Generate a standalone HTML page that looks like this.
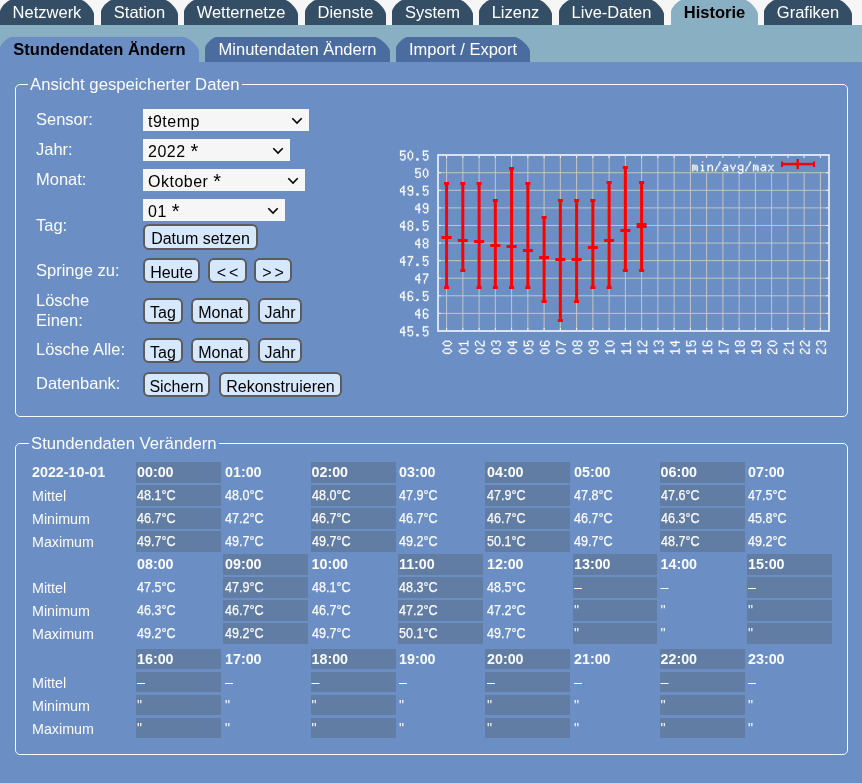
<!DOCTYPE html>
<html><head><meta charset="utf-8"><style>
*{box-sizing:border-box}
html,body{margin:0;padding:0}
body{will-change:transform;width:862px;height:783px;overflow:hidden;position:relative;background:#6b8fc4;font-family:"Liberation Sans",sans-serif;}
.abs{position:absolute}
#top{position:absolute;left:0;top:0;width:862px;height:25px;background:#f6f6f6}
#band{position:absolute;left:0;top:25px;width:862px;height:37px;background:#88b0c2}
.tab{position:absolute;top:0;height:25px;background:#344e66;color:#fff;font-size:16.5px;line-height:25px;text-align:center;
 white-space:nowrap}
.tab.act{background:#88b0c2;color:#000;font-weight:bold}
.sub{position:absolute;top:37px;height:25px;background:#4b6c9f;color:#fff;font-size:16.5px;line-height:25px;text-align:center;
 white-space:nowrap}
.sub.act{background:#6b8fc4;color:#000;font-weight:bold}
.fs{position:absolute;border:1px solid #fafafa;border-radius:5px}
.leg{position:absolute;background:#6b8fc4;color:#fbfbfb;font-size:16.7px;line-height:19px;padding:0 2px;white-space:nowrap}
.lbl{position:absolute;color:#fbfbfb;font-size:16.5px;line-height:20px;white-space:nowrap}
.sel{position:absolute;background:#f6f6f6;height:22px;color:#000;font-size:16px;line-height:22px;padding-top:1.5px;padding-left:5px;letter-spacing:0.5px;white-space:nowrap}
.ast{font-size:20px;position:relative;top:1px;line-height:0}
.sel svg{position:absolute;right:6px;top:7.5px}
.btn{position:absolute;background:#d6e8fc;border:2px solid #5c5c5c;border-radius:6px;color:#000;font-size:16px;text-align:center;white-space:nowrap}
.cl{position:absolute;color:#fbfbfb;font-size:14.3px;line-height:21px;white-space:nowrap}
.c{position:absolute;width:85px;height:21px;color:#fbfbfb;font-size:14.3px;line-height:21px;padding-left:1px;white-space:nowrap}
.c.d{background:#617da3}
.v{display:inline-block;transform:scaleX(0.88);transform-origin:0 50%;-webkit-text-stroke:0.25px #fbfbfb}
.b{font-weight:bold;font-size:14.3px}
</style></head><body>
<div id="top"></div><div id="band"></div>

<div class="tab" style="left:0px;width:94px;clip-path:path('M0 25L0 11.5C0 7.82 7.48 0 11 0L81 0C85.16 0 94 9.86 94 14.5L94 25Z')">Netzwerk</div>
<div class="tab" style="left:101px;width:77px;clip-path:path('M0 25L0 11.5C0 7.82 7.48 0 11 0L64 0C68.16 0 77 9.86 77 14.5L77 25Z')">Station</div>
<div class="tab" style="left:184px;width:114px;clip-path:path('M0 25L0 11.5C0 7.82 7.48 0 11 0L101 0C105.16 0 114 9.86 114 14.5L114 25Z')">Wetternetze</div>
<div class="tab" style="left:305px;width:81px;clip-path:path('M0 25L0 11.5C0 7.82 7.48 0 11 0L68 0C72.16 0 81 9.86 81 14.5L81 25Z')">Dienste</div>
<div class="tab" style="left:392px;width:81px;clip-path:path('M0 25L0 11.5C0 7.82 7.48 0 11 0L68 0C72.16 0 81 9.86 81 14.5L81 25Z')">System</div>
<div class="tab" style="left:479px;width:73px;clip-path:path('M0 25L0 11.5C0 7.82 7.48 0 11 0L60 0C64.16 0 73 9.86 73 14.5L73 25Z')">Lizenz</div>
<div class="tab" style="left:559px;width:105px;clip-path:path('M0 25L0 11.5C0 7.82 7.48 0 11 0L92 0C96.16 0 105 9.86 105 14.5L105 25Z')">Live-Daten</div>
<div class="tab act" style="left:671px;width:87px;clip-path:path('M0 25L0 11.5C0 7.82 7.48 0 11 0L74 0C78.16 0 87 9.86 87 14.5L87 25Z')">Historie</div>
<div class="tab" style="left:764px;width:88px;clip-path:path('M0 25L0 11.5C0 7.82 7.48 0 11 0L75 0C79.16 0 88 9.86 88 14.5L88 25Z')">Grafiken</div>
<div class="sub act" style="left:0px;width:199px;clip-path:path('M0 25L0 11C0 7.48 7.82 0 11.5 0L183.5 0C188.46 0 199 9.86 199 14.5L199 25Z')">Stundendaten Ändern</div>
<div class="sub" style="left:205px;width:185px;clip-path:path('M0 25L0 11C0 7.48 7.82 0 11.5 0L169.5 0C174.46 0 185 9.86 185 14.5L185 25Z')">Minutendaten Ändern</div>
<div class="sub" style="left:396px;width:134px;clip-path:path('M0 25L0 11C0 7.48 7.82 0 11.5 0L118.5 0C123.46 0 134 9.86 134 14.5L134 25Z')">Import / Export</div>
<div class="fs" style="left:15px;top:84px;width:833px;height:333px"></div>
<div class="leg" style="left:28px;top:75px">Ansicht gespeicherter Daten</div>
<div class="fs" style="left:15px;top:443px;width:833px;height:312px"></div>
<div class="leg" style="left:29px;top:434px">Stundendaten Verändern</div>
<div class="sel" style="left:143px;top:109px;width:166px">t9temp<svg width="12" height="8" viewBox="0 0 12 8"><path d="M1.3 1.3 L6 6 L10.7 1.3" fill="none" stroke="#000" stroke-width="1.6"/></svg></div>
<div class="sel" style="left:143px;top:139px;width:147px">2022 <span class=ast>*</span><svg width="12" height="8" viewBox="0 0 12 8"><path d="M1.3 1.3 L6 6 L10.7 1.3" fill="none" stroke="#000" stroke-width="1.6"/></svg></div>
<div class="sel" style="left:143px;top:169px;width:162px">Oktober <span class=ast>*</span><svg width="12" height="8" viewBox="0 0 12 8"><path d="M1.3 1.3 L6 6 L10.7 1.3" fill="none" stroke="#000" stroke-width="1.6"/></svg></div>
<div class="sel" style="left:143px;top:199px;width:142px">01 <span class=ast>*</span><svg width="12" height="8" viewBox="0 0 12 8"><path d="M1.3 1.3 L6 6 L10.7 1.3" fill="none" stroke="#000" stroke-width="1.6"/></svg></div>
<div class="lbl" style="left:36px;top:109px">Sensor:</div>
<div class="lbl" style="left:36px;top:139px">Jahr:</div>
<div class="lbl" style="left:36px;top:169px">Monat:</div>
<div class="lbl" style="left:36px;top:215px">Tag:</div>
<div class="lbl" style="left:36px;top:260px">Springe zu:</div>
<div class="lbl" style="left:36px;top:290px">Lösche</div>
<div class="lbl" style="left:36px;top:310px">Einen:</div>
<div class="lbl" style="left:36px;top:339px">Lösche Alle:</div>
<div class="lbl" style="left:36px;top:373px">Datenbank:</div>
<div class="btn" style="left:143px;top:224px;width:115px;height:25.5px;line-height:21.5px;padding-top:2px">Datum setzen</div>
<div class="btn" style="left:143px;top:258px;width:57px;height:25px;line-height:21px;padding-top:2px">Heute</div>
<div class="btn" style="left:208px;top:258px;width:39px;height:25px;line-height:21px;padding-top:2px"><span style="letter-spacing:3px;padding-left:3px">&lt;&lt;</span></div>
<div class="btn" style="left:254px;top:258px;width:38px;height:25px;line-height:21px;padding-top:2px"><span style="letter-spacing:3px;padding-left:3px">&gt;&gt;</span></div>
<div class="btn" style="left:143px;top:297.5px;width:40px;height:26.0px;line-height:22.0px;padding-top:2px">Tag</div>
<div class="btn" style="left:191px;top:297.5px;width:59px;height:26.0px;line-height:22.0px;padding-top:2px">Monat</div>
<div class="btn" style="left:258px;top:297.5px;width:44px;height:26.0px;line-height:22.0px;padding-top:2px">Jahr</div>
<div class="btn" style="left:143px;top:337.5px;width:40px;height:25.0px;line-height:21.0px;padding-top:2px">Tag</div>
<div class="btn" style="left:191px;top:337.5px;width:59px;height:25.0px;line-height:21.0px;padding-top:2px">Monat</div>
<div class="btn" style="left:258px;top:337.5px;width:44px;height:25.0px;line-height:21.0px;padding-top:2px">Jahr</div>
<div class="btn" style="left:143px;top:372px;width:67px;height:25px;line-height:21px;padding-top:2px">Sichern</div>
<div class="btn" style="left:219px;top:372px;width:123px;height:25px;line-height:21px;padding-top:2px">Rekonstruieren</div>
<svg class="abs" style="left:0;top:0" width="862" height="783" viewBox="0 0 862 783"><path d="M446.58 156V330 M462.83 156V330 M479.09 156V330 M495.34 156V330 M511.59 156V330 M527.85 156V330 M544.1 156V330 M560.35 156V330 M576.6 156V330 M592.86 156V330 M609.11 156V330 M625.36 156V330 M641.62 156V330 M657.87 156V330 M674.12 156V330 M690.38 156V330 M706.63 156V330 M722.88 156V330 M739.13 156V330 M755.39 156V330 M771.64 156V330 M787.89 156V330 M804.15 156V330 M820.4 156V330 M439 172.73H829 M439 190.31H829 M439 207.89H829 M439 225.47H829 M439 243.05H829 M439 260.63H829 M439 278.21H829 M439 295.79H829 M439 313.37H829" stroke="#c4c4c4" stroke-width="1" fill="none"/><rect x="691" y="156" width="137" height="16" fill="#6b8fc4"/><g fill="#f2f2f2"><rect x="446.08" y="156" width="1" height="2"/><rect x="446.08" y="328" width="1" height="2"/><rect x="462.33" y="156" width="1" height="2"/><rect x="462.33" y="328" width="1" height="2"/><rect x="478.59" y="156" width="1" height="2"/><rect x="478.59" y="328" width="1" height="2"/><rect x="494.84" y="156" width="1" height="2"/><rect x="494.84" y="328" width="1" height="2"/><rect x="511.09" y="156" width="1" height="2"/><rect x="511.09" y="328" width="1" height="2"/><rect x="527.35" y="156" width="1" height="2"/><rect x="527.35" y="328" width="1" height="2"/><rect x="543.60" y="156" width="1" height="2"/><rect x="543.60" y="328" width="1" height="2"/><rect x="559.85" y="156" width="1" height="2"/><rect x="559.85" y="328" width="1" height="2"/><rect x="576.10" y="156" width="1" height="2"/><rect x="576.10" y="328" width="1" height="2"/><rect x="592.36" y="156" width="1" height="2"/><rect x="592.36" y="328" width="1" height="2"/><rect x="608.61" y="156" width="1" height="2"/><rect x="608.61" y="328" width="1" height="2"/><rect x="624.86" y="156" width="1" height="2"/><rect x="624.86" y="328" width="1" height="2"/><rect x="641.12" y="156" width="1" height="2"/><rect x="641.12" y="328" width="1" height="2"/><rect x="657.37" y="156" width="1" height="2"/><rect x="657.37" y="328" width="1" height="2"/><rect x="673.62" y="156" width="1" height="2"/><rect x="673.62" y="328" width="1" height="2"/><rect x="689.88" y="156" width="1" height="2"/><rect x="689.88" y="328" width="1" height="2"/><rect x="706.13" y="156" width="1" height="2"/><rect x="706.13" y="328" width="1" height="2"/><rect x="722.38" y="156" width="1" height="2"/><rect x="722.38" y="328" width="1" height="2"/><rect x="738.63" y="156" width="1" height="2"/><rect x="738.63" y="328" width="1" height="2"/><rect x="754.89" y="156" width="1" height="2"/><rect x="754.89" y="328" width="1" height="2"/><rect x="771.14" y="156" width="1" height="2"/><rect x="771.14" y="328" width="1" height="2"/><rect x="787.39" y="156" width="1" height="2"/><rect x="787.39" y="328" width="1" height="2"/><rect x="803.65" y="156" width="1" height="2"/><rect x="803.65" y="328" width="1" height="2"/><rect x="819.90" y="156" width="1" height="2"/><rect x="819.90" y="328" width="1" height="2"/><rect x="439" y="172.23" width="2" height="1"/><rect x="826" y="172.23" width="2" height="1"/><rect x="439" y="189.81" width="2" height="1"/><rect x="826" y="189.81" width="2" height="1"/><rect x="439" y="207.39" width="2" height="1"/><rect x="826" y="207.39" width="2" height="1"/><rect x="439" y="224.97" width="2" height="1"/><rect x="826" y="224.97" width="2" height="1"/><rect x="439" y="242.55" width="2" height="1"/><rect x="826" y="242.55" width="2" height="1"/><rect x="439" y="260.13" width="2" height="1"/><rect x="826" y="260.13" width="2" height="1"/><rect x="439" y="277.71" width="2" height="1"/><rect x="826" y="277.71" width="2" height="1"/><rect x="439" y="295.29" width="2" height="1"/><rect x="826" y="295.29" width="2" height="1"/><rect x="439" y="312.87" width="2" height="1"/><rect x="826" y="312.87" width="2" height="1"/></g><rect x="438" y="155" width="391" height="176" fill="none" stroke="#e6ecf5" stroke-width="1.8"/><g fill="#ff0000"><rect x="445.08" y="183.3" width="3" height="104.7"/><rect x="444.08" y="182" width="5" height="3"/><rect x="444.08" y="286" width="5" height="3"/><rect x="441.58" y="236" width="10" height="3"/><rect x="461.33" y="183.3" width="3" height="86.9"/><rect x="460.33" y="182" width="5" height="3"/><rect x="460.33" y="269" width="5" height="3"/><rect x="457.83" y="239" width="10" height="3"/><rect x="477.59" y="183.3" width="3" height="104.7"/><rect x="476.59" y="182" width="5" height="3"/><rect x="476.59" y="286" width="5" height="3"/><rect x="474.09" y="240" width="10" height="3"/><rect x="493.84" y="200.7" width="3" height="87.3"/><rect x="492.84" y="199" width="5" height="3"/><rect x="492.84" y="286" width="5" height="3"/><rect x="490.34" y="244" width="10" height="3"/><rect x="510.09" y="168.3" width="3" height="119.7"/><rect x="509.09" y="167" width="5" height="3"/><rect x="509.09" y="286" width="5" height="3"/><rect x="506.59" y="245" width="10" height="3"/><rect x="526.35" y="183.3" width="3" height="104.7"/><rect x="525.35" y="182" width="5" height="3"/><rect x="525.35" y="286" width="5" height="3"/><rect x="522.85" y="249" width="10" height="3"/><rect x="542.6" y="217.9" width="3" height="83.6"/><rect x="541.6" y="216" width="5" height="3"/><rect x="541.6" y="300" width="5" height="3"/><rect x="539.1" y="256" width="10" height="3"/><rect x="558.85" y="200.4" width="3" height="119.8"/><rect x="557.85" y="199" width="5" height="3"/><rect x="557.85" y="319" width="5" height="3"/><rect x="555.35" y="258" width="10" height="3"/><rect x="575.1" y="200.4" width="3" height="101.1"/><rect x="574.1" y="199" width="5" height="3"/><rect x="574.1" y="300" width="5" height="3"/><rect x="571.6" y="258" width="10" height="3"/><rect x="591.36" y="200.4" width="3" height="87.2"/><rect x="590.36" y="199" width="5" height="3"/><rect x="590.36" y="286" width="5" height="3"/><rect x="587.86" y="246" width="10" height="3"/><rect x="607.61" y="182.8" width="3" height="104.8"/><rect x="606.61" y="181" width="5" height="3"/><rect x="606.61" y="286" width="5" height="3"/><rect x="604.11" y="239" width="10" height="3"/><rect x="623.86" y="168.0" width="3" height="102.2"/><rect x="622.86" y="166" width="5" height="3"/><rect x="622.86" y="269" width="5" height="3"/><rect x="620.36" y="229" width="10" height="3"/><rect x="640.12" y="182.8" width="3" height="87.4"/><rect x="639.12" y="181" width="5" height="3"/><rect x="639.12" y="269" width="5" height="3"/><rect x="636.62" y="223" width="10" height="5"/><rect x="781" y="162.8" width="34" height="2.6"/><rect x="781" y="161.5" width="2" height="5.5"/><rect x="813" y="161.5" width="2" height="5.5"/><rect x="796.5" y="159" width="2.4" height="10.2"/></g><g fill="#ffffff" stroke="#ffffff" stroke-width="0.22"><path transform="translate(400.09,150.55) scale(1.085,1.1)" d="M0 0h5v1h-5zM0 1h1v1h-1zM0 2h1v1h-1zM0 3h1v1h-1zM2 3h2v1h-2zM0 4h2v1h-2zM4 4h1v1h-1zM4 5h1v1h-1zM4 6h1v1h-1zM0 7h1v1h-1zM4 7h1v1h-1zM1 8h3v1h-3zM9 0h1v1h-1zM8 1h1v1h-1zM10 1h1v1h-1zM7 2h1v1h-1zM11 2h1v1h-1zM7 3h1v1h-1zM11 3h1v1h-1zM7 4h1v1h-1zM11 4h1v1h-1zM7 5h1v1h-1zM11 5h1v1h-1zM7 6h1v1h-1zM11 6h1v1h-1zM8 7h1v1h-1zM10 7h1v1h-1zM9 8h1v1h-1zM15 7h2v1h-2zM15 8h2v1h-2zM21 0h5v1h-5zM21 1h1v1h-1zM21 2h1v1h-1zM21 3h1v1h-1zM23 3h2v1h-2zM21 4h2v1h-2zM25 4h1v1h-1zM25 5h1v1h-1zM25 6h1v1h-1zM21 7h1v1h-1zM25 7h1v1h-1zM22 8h3v1h-3z"/><path transform="translate(415.28,168.13) scale(1.085,1.1)" d="M0 0h5v1h-5zM0 1h1v1h-1zM0 2h1v1h-1zM0 3h1v1h-1zM2 3h2v1h-2zM0 4h2v1h-2zM4 4h1v1h-1zM4 5h1v1h-1zM4 6h1v1h-1zM0 7h1v1h-1zM4 7h1v1h-1zM1 8h3v1h-3zM9 0h1v1h-1zM8 1h1v1h-1zM10 1h1v1h-1zM7 2h1v1h-1zM11 2h1v1h-1zM7 3h1v1h-1zM11 3h1v1h-1zM7 4h1v1h-1zM11 4h1v1h-1zM7 5h1v1h-1zM11 5h1v1h-1zM7 6h1v1h-1zM11 6h1v1h-1zM8 7h1v1h-1zM10 7h1v1h-1zM9 8h1v1h-1z"/><path transform="translate(400.09,185.71) scale(1.085,1.1)" d="M3 0h1v1h-1zM2 1h2v1h-2zM1 2h1v1h-1zM3 2h1v1h-1zM0 3h1v1h-1zM3 3h1v1h-1zM0 4h1v1h-1zM3 4h1v1h-1zM0 5h5v1h-5zM3 6h1v1h-1zM3 7h1v1h-1zM3 8h1v1h-1zM8 0h3v1h-3zM7 1h1v1h-1zM11 1h1v1h-1zM7 2h1v1h-1zM11 2h1v1h-1zM7 3h1v1h-1zM11 3h1v1h-1zM8 4h4v1h-4zM11 5h1v1h-1zM11 6h1v1h-1zM7 7h1v1h-1zM11 7h1v1h-1zM8 8h3v1h-3zM15 7h2v1h-2zM15 8h2v1h-2zM21 0h5v1h-5zM21 1h1v1h-1zM21 2h1v1h-1zM21 3h1v1h-1zM23 3h2v1h-2zM21 4h2v1h-2zM25 4h1v1h-1zM25 5h1v1h-1zM25 6h1v1h-1zM21 7h1v1h-1zM25 7h1v1h-1zM22 8h3v1h-3z"/><path transform="translate(415.28,203.29) scale(1.085,1.1)" d="M3 0h1v1h-1zM2 1h2v1h-2zM1 2h1v1h-1zM3 2h1v1h-1zM0 3h1v1h-1zM3 3h1v1h-1zM0 4h1v1h-1zM3 4h1v1h-1zM0 5h5v1h-5zM3 6h1v1h-1zM3 7h1v1h-1zM3 8h1v1h-1zM8 0h3v1h-3zM7 1h1v1h-1zM11 1h1v1h-1zM7 2h1v1h-1zM11 2h1v1h-1zM7 3h1v1h-1zM11 3h1v1h-1zM8 4h4v1h-4zM11 5h1v1h-1zM11 6h1v1h-1zM7 7h1v1h-1zM11 7h1v1h-1zM8 8h3v1h-3z"/><path transform="translate(400.09,220.87) scale(1.085,1.1)" d="M3 0h1v1h-1zM2 1h2v1h-2zM1 2h1v1h-1zM3 2h1v1h-1zM0 3h1v1h-1zM3 3h1v1h-1zM0 4h1v1h-1zM3 4h1v1h-1zM0 5h5v1h-5zM3 6h1v1h-1zM3 7h1v1h-1zM3 8h1v1h-1zM8 0h3v1h-3zM7 1h1v1h-1zM11 1h1v1h-1zM7 2h1v1h-1zM11 2h1v1h-1zM7 3h1v1h-1zM11 3h1v1h-1zM8 4h3v1h-3zM7 5h1v1h-1zM11 5h1v1h-1zM7 6h1v1h-1zM11 6h1v1h-1zM7 7h1v1h-1zM11 7h1v1h-1zM8 8h3v1h-3zM15 7h2v1h-2zM15 8h2v1h-2zM21 0h5v1h-5zM21 1h1v1h-1zM21 2h1v1h-1zM21 3h1v1h-1zM23 3h2v1h-2zM21 4h2v1h-2zM25 4h1v1h-1zM25 5h1v1h-1zM25 6h1v1h-1zM21 7h1v1h-1zM25 7h1v1h-1zM22 8h3v1h-3z"/><path transform="translate(415.28,238.45) scale(1.085,1.1)" d="M3 0h1v1h-1zM2 1h2v1h-2zM1 2h1v1h-1zM3 2h1v1h-1zM0 3h1v1h-1zM3 3h1v1h-1zM0 4h1v1h-1zM3 4h1v1h-1zM0 5h5v1h-5zM3 6h1v1h-1zM3 7h1v1h-1zM3 8h1v1h-1zM8 0h3v1h-3zM7 1h1v1h-1zM11 1h1v1h-1zM7 2h1v1h-1zM11 2h1v1h-1zM7 3h1v1h-1zM11 3h1v1h-1zM8 4h3v1h-3zM7 5h1v1h-1zM11 5h1v1h-1zM7 6h1v1h-1zM11 6h1v1h-1zM7 7h1v1h-1zM11 7h1v1h-1zM8 8h3v1h-3z"/><path transform="translate(400.09,256.03) scale(1.085,1.1)" d="M3 0h1v1h-1zM2 1h2v1h-2zM1 2h1v1h-1zM3 2h1v1h-1zM0 3h1v1h-1zM3 3h1v1h-1zM0 4h1v1h-1zM3 4h1v1h-1zM0 5h5v1h-5zM3 6h1v1h-1zM3 7h1v1h-1zM3 8h1v1h-1zM7 0h5v1h-5zM11 1h1v1h-1zM10 2h1v1h-1zM10 3h1v1h-1zM9 4h1v1h-1zM9 5h1v1h-1zM8 6h1v1h-1zM8 7h1v1h-1zM8 8h1v1h-1zM15 7h2v1h-2zM15 8h2v1h-2zM21 0h5v1h-5zM21 1h1v1h-1zM21 2h1v1h-1zM21 3h1v1h-1zM23 3h2v1h-2zM21 4h2v1h-2zM25 4h1v1h-1zM25 5h1v1h-1zM25 6h1v1h-1zM21 7h1v1h-1zM25 7h1v1h-1zM22 8h3v1h-3z"/><path transform="translate(415.28,273.61) scale(1.085,1.1)" d="M3 0h1v1h-1zM2 1h2v1h-2zM1 2h1v1h-1zM3 2h1v1h-1zM0 3h1v1h-1zM3 3h1v1h-1zM0 4h1v1h-1zM3 4h1v1h-1zM0 5h5v1h-5zM3 6h1v1h-1zM3 7h1v1h-1zM3 8h1v1h-1zM7 0h5v1h-5zM11 1h1v1h-1zM10 2h1v1h-1zM10 3h1v1h-1zM9 4h1v1h-1zM9 5h1v1h-1zM8 6h1v1h-1zM8 7h1v1h-1zM8 8h1v1h-1z"/><path transform="translate(400.09,291.19) scale(1.085,1.1)" d="M3 0h1v1h-1zM2 1h2v1h-2zM1 2h1v1h-1zM3 2h1v1h-1zM0 3h1v1h-1zM3 3h1v1h-1zM0 4h1v1h-1zM3 4h1v1h-1zM0 5h5v1h-5zM3 6h1v1h-1zM3 7h1v1h-1zM3 8h1v1h-1zM8 0h3v1h-3zM7 1h1v1h-1zM11 1h1v1h-1zM7 2h1v1h-1zM7 3h1v1h-1zM7 4h4v1h-4zM7 5h1v1h-1zM11 5h1v1h-1zM7 6h1v1h-1zM11 6h1v1h-1zM7 7h1v1h-1zM11 7h1v1h-1zM8 8h3v1h-3zM15 7h2v1h-2zM15 8h2v1h-2zM21 0h5v1h-5zM21 1h1v1h-1zM21 2h1v1h-1zM21 3h1v1h-1zM23 3h2v1h-2zM21 4h2v1h-2zM25 4h1v1h-1zM25 5h1v1h-1zM25 6h1v1h-1zM21 7h1v1h-1zM25 7h1v1h-1zM22 8h3v1h-3z"/><path transform="translate(415.28,308.77) scale(1.085,1.1)" d="M3 0h1v1h-1zM2 1h2v1h-2zM1 2h1v1h-1zM3 2h1v1h-1zM0 3h1v1h-1zM3 3h1v1h-1zM0 4h1v1h-1zM3 4h1v1h-1zM0 5h5v1h-5zM3 6h1v1h-1zM3 7h1v1h-1zM3 8h1v1h-1zM8 0h3v1h-3zM7 1h1v1h-1zM11 1h1v1h-1zM7 2h1v1h-1zM7 3h1v1h-1zM7 4h4v1h-4zM7 5h1v1h-1zM11 5h1v1h-1zM7 6h1v1h-1zM11 6h1v1h-1zM7 7h1v1h-1zM11 7h1v1h-1zM8 8h3v1h-3z"/><path transform="translate(400.09,326.35) scale(1.085,1.1)" d="M3 0h1v1h-1zM2 1h2v1h-2zM1 2h1v1h-1zM3 2h1v1h-1zM0 3h1v1h-1zM3 3h1v1h-1zM0 4h1v1h-1zM3 4h1v1h-1zM0 5h5v1h-5zM3 6h1v1h-1zM3 7h1v1h-1zM3 8h1v1h-1zM7 0h5v1h-5zM7 1h1v1h-1zM7 2h1v1h-1zM7 3h1v1h-1zM9 3h2v1h-2zM7 4h2v1h-2zM11 4h1v1h-1zM11 5h1v1h-1zM11 6h1v1h-1zM7 7h1v1h-1zM11 7h1v1h-1zM8 8h3v1h-3zM15 7h2v1h-2zM15 8h2v1h-2zM21 0h5v1h-5zM21 1h1v1h-1zM21 2h1v1h-1zM21 3h1v1h-1zM23 3h2v1h-2zM21 4h2v1h-2zM25 4h1v1h-1zM25 5h1v1h-1zM25 6h1v1h-1zM21 7h1v1h-1zM25 7h1v1h-1zM22 8h3v1h-3z"/><path transform="translate(442.40,353.9) rotate(-90) scale(1.1,1.085)" d="M2 0h1v1h-1zM1 1h1v1h-1zM3 1h1v1h-1zM0 2h1v1h-1zM4 2h1v1h-1zM0 3h1v1h-1zM4 3h1v1h-1zM0 4h1v1h-1zM4 4h1v1h-1zM0 5h1v1h-1zM4 5h1v1h-1zM0 6h1v1h-1zM4 6h1v1h-1zM1 7h1v1h-1zM3 7h1v1h-1zM2 8h1v1h-1zM9 0h1v1h-1zM8 1h1v1h-1zM10 1h1v1h-1zM7 2h1v1h-1zM11 2h1v1h-1zM7 3h1v1h-1zM11 3h1v1h-1zM7 4h1v1h-1zM11 4h1v1h-1zM7 5h1v1h-1zM11 5h1v1h-1zM7 6h1v1h-1zM11 6h1v1h-1zM8 7h1v1h-1zM10 7h1v1h-1zM9 8h1v1h-1z"/><path transform="translate(458.65,353.9) rotate(-90) scale(1.1,1.085)" d="M2 0h1v1h-1zM1 1h1v1h-1zM3 1h1v1h-1zM0 2h1v1h-1zM4 2h1v1h-1zM0 3h1v1h-1zM4 3h1v1h-1zM0 4h1v1h-1zM4 4h1v1h-1zM0 5h1v1h-1zM4 5h1v1h-1zM0 6h1v1h-1zM4 6h1v1h-1zM1 7h1v1h-1zM3 7h1v1h-1zM2 8h1v1h-1zM9 0h1v1h-1zM8 1h2v1h-2zM7 2h1v1h-1zM9 2h1v1h-1zM9 3h1v1h-1zM9 4h1v1h-1zM9 5h1v1h-1zM9 6h1v1h-1zM9 7h1v1h-1zM7 8h5v1h-5z"/><path transform="translate(474.90,353.9) rotate(-90) scale(1.1,1.085)" d="M2 0h1v1h-1zM1 1h1v1h-1zM3 1h1v1h-1zM0 2h1v1h-1zM4 2h1v1h-1zM0 3h1v1h-1zM4 3h1v1h-1zM0 4h1v1h-1zM4 4h1v1h-1zM0 5h1v1h-1zM4 5h1v1h-1zM0 6h1v1h-1zM4 6h1v1h-1zM1 7h1v1h-1zM3 7h1v1h-1zM2 8h1v1h-1zM8 0h3v1h-3zM7 1h1v1h-1zM11 1h1v1h-1zM11 2h1v1h-1zM10 3h1v1h-1zM9 4h1v1h-1zM8 5h1v1h-1zM7 6h1v1h-1zM7 7h1v1h-1zM7 8h5v1h-5z"/><path transform="translate(491.16,353.9) rotate(-90) scale(1.1,1.085)" d="M2 0h1v1h-1zM1 1h1v1h-1zM3 1h1v1h-1zM0 2h1v1h-1zM4 2h1v1h-1zM0 3h1v1h-1zM4 3h1v1h-1zM0 4h1v1h-1zM4 4h1v1h-1zM0 5h1v1h-1zM4 5h1v1h-1zM0 6h1v1h-1zM4 6h1v1h-1zM1 7h1v1h-1zM3 7h1v1h-1zM2 8h1v1h-1zM8 0h3v1h-3zM7 1h1v1h-1zM11 1h1v1h-1zM11 2h1v1h-1zM11 3h1v1h-1zM9 4h2v1h-2zM11 5h1v1h-1zM11 6h1v1h-1zM7 7h1v1h-1zM11 7h1v1h-1zM8 8h3v1h-3z"/><path transform="translate(507.41,353.9) rotate(-90) scale(1.1,1.085)" d="M2 0h1v1h-1zM1 1h1v1h-1zM3 1h1v1h-1zM0 2h1v1h-1zM4 2h1v1h-1zM0 3h1v1h-1zM4 3h1v1h-1zM0 4h1v1h-1zM4 4h1v1h-1zM0 5h1v1h-1zM4 5h1v1h-1zM0 6h1v1h-1zM4 6h1v1h-1zM1 7h1v1h-1zM3 7h1v1h-1zM2 8h1v1h-1zM10 0h1v1h-1zM9 1h2v1h-2zM8 2h1v1h-1zM10 2h1v1h-1zM7 3h1v1h-1zM10 3h1v1h-1zM7 4h1v1h-1zM10 4h1v1h-1zM7 5h5v1h-5zM10 6h1v1h-1zM10 7h1v1h-1zM10 8h1v1h-1z"/><path transform="translate(523.66,353.9) rotate(-90) scale(1.1,1.085)" d="M2 0h1v1h-1zM1 1h1v1h-1zM3 1h1v1h-1zM0 2h1v1h-1zM4 2h1v1h-1zM0 3h1v1h-1zM4 3h1v1h-1zM0 4h1v1h-1zM4 4h1v1h-1zM0 5h1v1h-1zM4 5h1v1h-1zM0 6h1v1h-1zM4 6h1v1h-1zM1 7h1v1h-1zM3 7h1v1h-1zM2 8h1v1h-1zM7 0h5v1h-5zM7 1h1v1h-1zM7 2h1v1h-1zM7 3h1v1h-1zM9 3h2v1h-2zM7 4h2v1h-2zM11 4h1v1h-1zM11 5h1v1h-1zM11 6h1v1h-1zM7 7h1v1h-1zM11 7h1v1h-1zM8 8h3v1h-3z"/><path transform="translate(539.92,353.9) rotate(-90) scale(1.1,1.085)" d="M2 0h1v1h-1zM1 1h1v1h-1zM3 1h1v1h-1zM0 2h1v1h-1zM4 2h1v1h-1zM0 3h1v1h-1zM4 3h1v1h-1zM0 4h1v1h-1zM4 4h1v1h-1zM0 5h1v1h-1zM4 5h1v1h-1zM0 6h1v1h-1zM4 6h1v1h-1zM1 7h1v1h-1zM3 7h1v1h-1zM2 8h1v1h-1zM8 0h3v1h-3zM7 1h1v1h-1zM11 1h1v1h-1zM7 2h1v1h-1zM7 3h1v1h-1zM7 4h4v1h-4zM7 5h1v1h-1zM11 5h1v1h-1zM7 6h1v1h-1zM11 6h1v1h-1zM7 7h1v1h-1zM11 7h1v1h-1zM8 8h3v1h-3z"/><path transform="translate(556.17,353.9) rotate(-90) scale(1.1,1.085)" d="M2 0h1v1h-1zM1 1h1v1h-1zM3 1h1v1h-1zM0 2h1v1h-1zM4 2h1v1h-1zM0 3h1v1h-1zM4 3h1v1h-1zM0 4h1v1h-1zM4 4h1v1h-1zM0 5h1v1h-1zM4 5h1v1h-1zM0 6h1v1h-1zM4 6h1v1h-1zM1 7h1v1h-1zM3 7h1v1h-1zM2 8h1v1h-1zM7 0h5v1h-5zM11 1h1v1h-1zM10 2h1v1h-1zM10 3h1v1h-1zM9 4h1v1h-1zM9 5h1v1h-1zM8 6h1v1h-1zM8 7h1v1h-1zM8 8h1v1h-1z"/><path transform="translate(572.42,353.9) rotate(-90) scale(1.1,1.085)" d="M2 0h1v1h-1zM1 1h1v1h-1zM3 1h1v1h-1zM0 2h1v1h-1zM4 2h1v1h-1zM0 3h1v1h-1zM4 3h1v1h-1zM0 4h1v1h-1zM4 4h1v1h-1zM0 5h1v1h-1zM4 5h1v1h-1zM0 6h1v1h-1zM4 6h1v1h-1zM1 7h1v1h-1zM3 7h1v1h-1zM2 8h1v1h-1zM8 0h3v1h-3zM7 1h1v1h-1zM11 1h1v1h-1zM7 2h1v1h-1zM11 2h1v1h-1zM7 3h1v1h-1zM11 3h1v1h-1zM8 4h3v1h-3zM7 5h1v1h-1zM11 5h1v1h-1zM7 6h1v1h-1zM11 6h1v1h-1zM7 7h1v1h-1zM11 7h1v1h-1zM8 8h3v1h-3z"/><path transform="translate(588.67,353.9) rotate(-90) scale(1.1,1.085)" d="M2 0h1v1h-1zM1 1h1v1h-1zM3 1h1v1h-1zM0 2h1v1h-1zM4 2h1v1h-1zM0 3h1v1h-1zM4 3h1v1h-1zM0 4h1v1h-1zM4 4h1v1h-1zM0 5h1v1h-1zM4 5h1v1h-1zM0 6h1v1h-1zM4 6h1v1h-1zM1 7h1v1h-1zM3 7h1v1h-1zM2 8h1v1h-1zM8 0h3v1h-3zM7 1h1v1h-1zM11 1h1v1h-1zM7 2h1v1h-1zM11 2h1v1h-1zM7 3h1v1h-1zM11 3h1v1h-1zM8 4h4v1h-4zM11 5h1v1h-1zM11 6h1v1h-1zM7 7h1v1h-1zM11 7h1v1h-1zM8 8h3v1h-3z"/><path transform="translate(604.93,353.9) rotate(-90) scale(1.1,1.085)" d="M2 0h1v1h-1zM1 1h2v1h-2zM0 2h1v1h-1zM2 2h1v1h-1zM2 3h1v1h-1zM2 4h1v1h-1zM2 5h1v1h-1zM2 6h1v1h-1zM2 7h1v1h-1zM0 8h5v1h-5zM9 0h1v1h-1zM8 1h1v1h-1zM10 1h1v1h-1zM7 2h1v1h-1zM11 2h1v1h-1zM7 3h1v1h-1zM11 3h1v1h-1zM7 4h1v1h-1zM11 4h1v1h-1zM7 5h1v1h-1zM11 5h1v1h-1zM7 6h1v1h-1zM11 6h1v1h-1zM8 7h1v1h-1zM10 7h1v1h-1zM9 8h1v1h-1z"/><path transform="translate(621.18,353.9) rotate(-90) scale(1.1,1.085)" d="M2 0h1v1h-1zM1 1h2v1h-2zM0 2h1v1h-1zM2 2h1v1h-1zM2 3h1v1h-1zM2 4h1v1h-1zM2 5h1v1h-1zM2 6h1v1h-1zM2 7h1v1h-1zM0 8h5v1h-5zM9 0h1v1h-1zM8 1h2v1h-2zM7 2h1v1h-1zM9 2h1v1h-1zM9 3h1v1h-1zM9 4h1v1h-1zM9 5h1v1h-1zM9 6h1v1h-1zM9 7h1v1h-1zM7 8h5v1h-5z"/><path transform="translate(637.43,353.9) rotate(-90) scale(1.1,1.085)" d="M2 0h1v1h-1zM1 1h2v1h-2zM0 2h1v1h-1zM2 2h1v1h-1zM2 3h1v1h-1zM2 4h1v1h-1zM2 5h1v1h-1zM2 6h1v1h-1zM2 7h1v1h-1zM0 8h5v1h-5zM8 0h3v1h-3zM7 1h1v1h-1zM11 1h1v1h-1zM11 2h1v1h-1zM10 3h1v1h-1zM9 4h1v1h-1zM8 5h1v1h-1zM7 6h1v1h-1zM7 7h1v1h-1zM7 8h5v1h-5z"/><path transform="translate(653.69,353.9) rotate(-90) scale(1.1,1.085)" d="M2 0h1v1h-1zM1 1h2v1h-2zM0 2h1v1h-1zM2 2h1v1h-1zM2 3h1v1h-1zM2 4h1v1h-1zM2 5h1v1h-1zM2 6h1v1h-1zM2 7h1v1h-1zM0 8h5v1h-5zM8 0h3v1h-3zM7 1h1v1h-1zM11 1h1v1h-1zM11 2h1v1h-1zM11 3h1v1h-1zM9 4h2v1h-2zM11 5h1v1h-1zM11 6h1v1h-1zM7 7h1v1h-1zM11 7h1v1h-1zM8 8h3v1h-3z"/><path transform="translate(669.94,353.9) rotate(-90) scale(1.1,1.085)" d="M2 0h1v1h-1zM1 1h2v1h-2zM0 2h1v1h-1zM2 2h1v1h-1zM2 3h1v1h-1zM2 4h1v1h-1zM2 5h1v1h-1zM2 6h1v1h-1zM2 7h1v1h-1zM0 8h5v1h-5zM10 0h1v1h-1zM9 1h2v1h-2zM8 2h1v1h-1zM10 2h1v1h-1zM7 3h1v1h-1zM10 3h1v1h-1zM7 4h1v1h-1zM10 4h1v1h-1zM7 5h5v1h-5zM10 6h1v1h-1zM10 7h1v1h-1zM10 8h1v1h-1z"/><path transform="translate(686.19,353.9) rotate(-90) scale(1.1,1.085)" d="M2 0h1v1h-1zM1 1h2v1h-2zM0 2h1v1h-1zM2 2h1v1h-1zM2 3h1v1h-1zM2 4h1v1h-1zM2 5h1v1h-1zM2 6h1v1h-1zM2 7h1v1h-1zM0 8h5v1h-5zM7 0h5v1h-5zM7 1h1v1h-1zM7 2h1v1h-1zM7 3h1v1h-1zM9 3h2v1h-2zM7 4h2v1h-2zM11 4h1v1h-1zM11 5h1v1h-1zM11 6h1v1h-1zM7 7h1v1h-1zM11 7h1v1h-1zM8 8h3v1h-3z"/><path transform="translate(702.45,353.9) rotate(-90) scale(1.1,1.085)" d="M2 0h1v1h-1zM1 1h2v1h-2zM0 2h1v1h-1zM2 2h1v1h-1zM2 3h1v1h-1zM2 4h1v1h-1zM2 5h1v1h-1zM2 6h1v1h-1zM2 7h1v1h-1zM0 8h5v1h-5zM8 0h3v1h-3zM7 1h1v1h-1zM11 1h1v1h-1zM7 2h1v1h-1zM7 3h1v1h-1zM7 4h4v1h-4zM7 5h1v1h-1zM11 5h1v1h-1zM7 6h1v1h-1zM11 6h1v1h-1zM7 7h1v1h-1zM11 7h1v1h-1zM8 8h3v1h-3z"/><path transform="translate(718.70,353.9) rotate(-90) scale(1.1,1.085)" d="M2 0h1v1h-1zM1 1h2v1h-2zM0 2h1v1h-1zM2 2h1v1h-1zM2 3h1v1h-1zM2 4h1v1h-1zM2 5h1v1h-1zM2 6h1v1h-1zM2 7h1v1h-1zM0 8h5v1h-5zM7 0h5v1h-5zM11 1h1v1h-1zM10 2h1v1h-1zM10 3h1v1h-1zM9 4h1v1h-1zM9 5h1v1h-1zM8 6h1v1h-1zM8 7h1v1h-1zM8 8h1v1h-1z"/><path transform="translate(734.95,353.9) rotate(-90) scale(1.1,1.085)" d="M2 0h1v1h-1zM1 1h2v1h-2zM0 2h1v1h-1zM2 2h1v1h-1zM2 3h1v1h-1zM2 4h1v1h-1zM2 5h1v1h-1zM2 6h1v1h-1zM2 7h1v1h-1zM0 8h5v1h-5zM8 0h3v1h-3zM7 1h1v1h-1zM11 1h1v1h-1zM7 2h1v1h-1zM11 2h1v1h-1zM7 3h1v1h-1zM11 3h1v1h-1zM8 4h3v1h-3zM7 5h1v1h-1zM11 5h1v1h-1zM7 6h1v1h-1zM11 6h1v1h-1zM7 7h1v1h-1zM11 7h1v1h-1zM8 8h3v1h-3z"/><path transform="translate(751.20,353.9) rotate(-90) scale(1.1,1.085)" d="M2 0h1v1h-1zM1 1h2v1h-2zM0 2h1v1h-1zM2 2h1v1h-1zM2 3h1v1h-1zM2 4h1v1h-1zM2 5h1v1h-1zM2 6h1v1h-1zM2 7h1v1h-1zM0 8h5v1h-5zM8 0h3v1h-3zM7 1h1v1h-1zM11 1h1v1h-1zM7 2h1v1h-1zM11 2h1v1h-1zM7 3h1v1h-1zM11 3h1v1h-1zM8 4h4v1h-4zM11 5h1v1h-1zM11 6h1v1h-1zM7 7h1v1h-1zM11 7h1v1h-1zM8 8h3v1h-3z"/><path transform="translate(767.46,353.9) rotate(-90) scale(1.1,1.085)" d="M1 0h3v1h-3zM0 1h1v1h-1zM4 1h1v1h-1zM4 2h1v1h-1zM3 3h1v1h-1zM2 4h1v1h-1zM1 5h1v1h-1zM0 6h1v1h-1zM0 7h1v1h-1zM0 8h5v1h-5zM9 0h1v1h-1zM8 1h1v1h-1zM10 1h1v1h-1zM7 2h1v1h-1zM11 2h1v1h-1zM7 3h1v1h-1zM11 3h1v1h-1zM7 4h1v1h-1zM11 4h1v1h-1zM7 5h1v1h-1zM11 5h1v1h-1zM7 6h1v1h-1zM11 6h1v1h-1zM8 7h1v1h-1zM10 7h1v1h-1zM9 8h1v1h-1z"/><path transform="translate(783.71,353.9) rotate(-90) scale(1.1,1.085)" d="M1 0h3v1h-3zM0 1h1v1h-1zM4 1h1v1h-1zM4 2h1v1h-1zM3 3h1v1h-1zM2 4h1v1h-1zM1 5h1v1h-1zM0 6h1v1h-1zM0 7h1v1h-1zM0 8h5v1h-5zM9 0h1v1h-1zM8 1h2v1h-2zM7 2h1v1h-1zM9 2h1v1h-1zM9 3h1v1h-1zM9 4h1v1h-1zM9 5h1v1h-1zM9 6h1v1h-1zM9 7h1v1h-1zM7 8h5v1h-5z"/><path transform="translate(799.96,353.9) rotate(-90) scale(1.1,1.085)" d="M1 0h3v1h-3zM0 1h1v1h-1zM4 1h1v1h-1zM4 2h1v1h-1zM3 3h1v1h-1zM2 4h1v1h-1zM1 5h1v1h-1zM0 6h1v1h-1zM0 7h1v1h-1zM0 8h5v1h-5zM8 0h3v1h-3zM7 1h1v1h-1zM11 1h1v1h-1zM11 2h1v1h-1zM10 3h1v1h-1zM9 4h1v1h-1zM8 5h1v1h-1zM7 6h1v1h-1zM7 7h1v1h-1zM7 8h5v1h-5z"/><path transform="translate(816.22,353.9) rotate(-90) scale(1.1,1.085)" d="M1 0h3v1h-3zM0 1h1v1h-1zM4 1h1v1h-1zM4 2h1v1h-1zM3 3h1v1h-1zM2 4h1v1h-1zM1 5h1v1h-1zM0 6h1v1h-1zM0 7h1v1h-1zM0 8h5v1h-5zM8 0h3v1h-3zM7 1h1v1h-1zM11 1h1v1h-1zM11 2h1v1h-1zM11 3h1v1h-1zM9 4h2v1h-2zM11 5h1v1h-1zM11 6h1v1h-1zM7 7h1v1h-1zM11 7h1v1h-1zM8 8h3v1h-3z"/><path transform="translate(692.3,161.4) scale(1.085,1.1)" d="M0 3h2v1h-2zM3 3h1v1h-1zM0 4h1v1h-1zM2 4h1v1h-1zM4 4h1v1h-1zM0 5h1v1h-1zM2 5h1v1h-1zM4 5h1v1h-1zM0 6h1v1h-1zM2 6h1v1h-1zM4 6h1v1h-1zM0 7h1v1h-1zM2 7h1v1h-1zM4 7h1v1h-1zM0 8h1v1h-1zM4 8h1v1h-1zM9 0h1v1h-1zM8 3h2v1h-2zM9 4h1v1h-1zM9 5h1v1h-1zM9 6h1v1h-1zM9 7h1v1h-1zM8 8h3v1h-3zM14 3h1v1h-1zM16 3h2v1h-2zM14 4h2v1h-2zM18 4h1v1h-1zM14 5h1v1h-1zM18 5h1v1h-1zM14 6h1v1h-1zM18 6h1v1h-1zM14 7h1v1h-1zM18 7h1v1h-1zM14 8h1v1h-1zM18 8h1v1h-1zM25 0h1v1h-1zM25 1h1v1h-1zM24 2h1v1h-1zM24 3h1v1h-1zM23 4h1v1h-1zM22 5h1v1h-1zM22 6h1v1h-1zM21 7h1v1h-1zM21 8h1v1h-1zM29 3h3v1h-3zM32 4h1v1h-1zM29 5h4v1h-4zM28 6h1v1h-1zM32 6h1v1h-1zM28 7h1v1h-1zM31 7h2v1h-2zM29 8h2v1h-2zM32 8h1v1h-1zM35 3h1v1h-1zM39 3h1v1h-1zM35 4h1v1h-1zM39 4h1v1h-1zM36 5h1v1h-1zM38 5h1v1h-1zM36 6h1v1h-1zM38 6h1v1h-1zM37 7h1v1h-1zM37 8h1v1h-1zM43 3h4v1h-4zM42 4h1v1h-1zM46 4h1v1h-1zM42 5h1v1h-1zM46 5h1v1h-1zM42 6h1v1h-1zM46 6h1v1h-1zM43 7h4v1h-4zM46 8h1v1h-1zM42 9h1v1h-1zM46 9h1v1h-1zM43 10h3v1h-3zM53 0h1v1h-1zM53 1h1v1h-1zM52 2h1v1h-1zM52 3h1v1h-1zM51 4h1v1h-1zM50 5h1v1h-1zM50 6h1v1h-1zM49 7h1v1h-1zM49 8h1v1h-1zM56 3h2v1h-2zM59 3h1v1h-1zM56 4h1v1h-1zM58 4h1v1h-1zM60 4h1v1h-1zM56 5h1v1h-1zM58 5h1v1h-1zM60 5h1v1h-1zM56 6h1v1h-1zM58 6h1v1h-1zM60 6h1v1h-1zM56 7h1v1h-1zM58 7h1v1h-1zM60 7h1v1h-1zM56 8h1v1h-1zM60 8h1v1h-1zM64 3h3v1h-3zM67 4h1v1h-1zM64 5h4v1h-4zM63 6h1v1h-1zM67 6h1v1h-1zM63 7h1v1h-1zM66 7h2v1h-2zM64 8h2v1h-2zM67 8h1v1h-1zM70 3h1v1h-1zM74 3h1v1h-1zM71 4h1v1h-1zM73 4h1v1h-1zM72 5h1v1h-1zM72 6h1v1h-1zM71 7h1v1h-1zM73 7h1v1h-1zM70 8h1v1h-1zM74 8h1v1h-1z"/></g></svg>
<div class="cl b" style="left:32px;top:462px">2022-10-01</div>
<div class="cl" style="left:32px;top:486px">Mittel</div>
<div class="cl" style="left:32px;top:509px">Minimum</div>
<div class="cl" style="left:32px;top:532px">Maximum</div>
<div class="c b d" style="left:136px;width:85px;height:21px;line-height:21px;padding-left:1px;top:462px">00:00</div>
<div class="c d" style="left:136px;width:85px;height:21px;line-height:21px;padding-left:1px;top:485px"><span class="v">48.1°C</span></div>
<div class="c d" style="left:136px;width:85px;height:21px;line-height:21px;padding-left:1px;top:508px"><span class="v">46.7°C</span></div>
<div class="c d" style="left:136px;width:85px;height:21px;line-height:21px;padding-left:1px;top:531px"><span class="v">49.7°C</span></div>
<div class="c b" style="left:223px;width:85px;height:21px;line-height:21px;padding-left:2px;top:462px">01:00</div>
<div class="c" style="left:223px;width:85px;height:21px;line-height:21px;padding-left:2px;top:485px"><span class="v">48.0°C</span></div>
<div class="c" style="left:223px;width:85px;height:21px;line-height:21px;padding-left:2px;top:508px"><span class="v">47.2°C</span></div>
<div class="c" style="left:223px;width:85px;height:21px;line-height:21px;padding-left:2px;top:531px"><span class="v">49.7°C</span></div>
<div class="c b d" style="left:311px;width:85px;height:21px;line-height:21px;padding-left:0.5px;top:462px">02:00</div>
<div class="c d" style="left:311px;width:85px;height:21px;line-height:21px;padding-left:0.5px;top:485px"><span class="v">48.0°C</span></div>
<div class="c d" style="left:311px;width:85px;height:21px;line-height:21px;padding-left:0.5px;top:508px"><span class="v">46.7°C</span></div>
<div class="c d" style="left:311px;width:85px;height:21px;line-height:21px;padding-left:0.5px;top:531px"><span class="v">49.7°C</span></div>
<div class="c b" style="left:398px;width:85px;height:21px;line-height:21px;padding-left:1px;top:462px">03:00</div>
<div class="c" style="left:398px;width:85px;height:21px;line-height:21px;padding-left:1px;top:485px"><span class="v">47.9°C</span></div>
<div class="c" style="left:398px;width:85px;height:21px;line-height:21px;padding-left:1px;top:508px"><span class="v">46.7°C</span></div>
<div class="c" style="left:398px;width:85px;height:21px;line-height:21px;padding-left:1px;top:531px"><span class="v">49.2°C</span></div>
<div class="c b d" style="left:485px;width:85px;height:21px;line-height:21px;padding-left:2px;top:462px">04:00</div>
<div class="c d" style="left:485px;width:85px;height:21px;line-height:21px;padding-left:2px;top:485px"><span class="v">47.9°C</span></div>
<div class="c d" style="left:485px;width:85px;height:21px;line-height:21px;padding-left:2px;top:508px"><span class="v">46.7°C</span></div>
<div class="c d" style="left:485px;width:85px;height:21px;line-height:21px;padding-left:2px;top:531px"><span class="v">50.1°C</span></div>
<div class="c b" style="left:573px;width:84px;height:21px;line-height:21px;padding-left:1px;top:462px">05:00</div>
<div class="c" style="left:573px;width:84px;height:21px;line-height:21px;padding-left:1px;top:485px"><span class="v">47.8°C</span></div>
<div class="c" style="left:573px;width:84px;height:21px;line-height:21px;padding-left:1px;top:508px"><span class="v">46.7°C</span></div>
<div class="c" style="left:573px;width:84px;height:21px;line-height:21px;padding-left:1px;top:531px"><span class="v">49.7°C</span></div>
<div class="c b d" style="left:660px;width:85px;height:21px;line-height:21px;padding-left:0.5px;top:462px">06:00</div>
<div class="c d" style="left:660px;width:85px;height:21px;line-height:21px;padding-left:0.5px;top:485px"><span class="v">47.6°C</span></div>
<div class="c d" style="left:660px;width:85px;height:21px;line-height:21px;padding-left:0.5px;top:508px"><span class="v">46.3°C</span></div>
<div class="c d" style="left:660px;width:85px;height:21px;line-height:21px;padding-left:0.5px;top:531px"><span class="v">48.7°C</span></div>
<div class="c b" style="left:747px;width:85px;height:21px;line-height:21px;padding-left:1px;top:462px">07:00</div>
<div class="c" style="left:747px;width:85px;height:21px;line-height:21px;padding-left:1px;top:485px"><span class="v">47.5°C</span></div>
<div class="c" style="left:747px;width:85px;height:21px;line-height:21px;padding-left:1px;top:508px"><span class="v">45.8°C</span></div>
<div class="c" style="left:747px;width:85px;height:21px;line-height:21px;padding-left:1px;top:531px"><span class="v">49.2°C</span></div>
<div class="cl" style="left:32px;top:578px">Mittel</div>
<div class="cl" style="left:32px;top:601px">Minimum</div>
<div class="cl" style="left:32px;top:624px">Maximum</div>
<div class="c b" style="left:136px;width:85px;height:21px;line-height:21px;padding-left:1px;top:554px">08:00</div>
<div class="c" style="left:136px;width:85px;height:21px;line-height:21px;padding-left:1px;top:577px"><span class="v">47.5°C</span></div>
<div class="c" style="left:136px;width:85px;height:21px;line-height:21px;padding-left:1px;top:600px"><span class="v">46.3°C</span></div>
<div class="c" style="left:136px;width:85px;height:21px;line-height:21px;padding-left:1px;top:623px"><span class="v">49.2°C</span></div>
<div class="c b d" style="left:223px;width:85px;height:21px;line-height:21px;padding-left:2px;top:554px">09:00</div>
<div class="c d" style="left:223px;width:85px;height:21px;line-height:21px;padding-left:2px;top:577px"><span class="v">47.9°C</span></div>
<div class="c d" style="left:223px;width:85px;height:21px;line-height:21px;padding-left:2px;top:600px"><span class="v">46.7°C</span></div>
<div class="c d" style="left:223px;width:85px;height:21px;line-height:21px;padding-left:2px;top:623px"><span class="v">49.2°C</span></div>
<div class="c b" style="left:311px;width:85px;height:21px;line-height:21px;padding-left:0.5px;top:554px">10:00</div>
<div class="c" style="left:311px;width:85px;height:21px;line-height:21px;padding-left:0.5px;top:577px"><span class="v">48.1°C</span></div>
<div class="c" style="left:311px;width:85px;height:21px;line-height:21px;padding-left:0.5px;top:600px"><span class="v">46.7°C</span></div>
<div class="c" style="left:311px;width:85px;height:21px;line-height:21px;padding-left:0.5px;top:623px"><span class="v">49.7°C</span></div>
<div class="c b d" style="left:398px;width:85px;height:21px;line-height:21px;padding-left:1px;top:554px">11:00</div>
<div class="c d" style="left:398px;width:85px;height:21px;line-height:21px;padding-left:1px;top:577px"><span class="v">48.3°C</span></div>
<div class="c d" style="left:398px;width:85px;height:21px;line-height:21px;padding-left:1px;top:600px"><span class="v">47.2°C</span></div>
<div class="c d" style="left:398px;width:85px;height:21px;line-height:21px;padding-left:1px;top:623px"><span class="v">50.1°C</span></div>
<div class="c b" style="left:485px;width:85px;height:21px;line-height:21px;padding-left:2px;top:554px">12:00</div>
<div class="c" style="left:485px;width:85px;height:21px;line-height:21px;padding-left:2px;top:577px"><span class="v">48.5°C</span></div>
<div class="c" style="left:485px;width:85px;height:21px;line-height:21px;padding-left:2px;top:600px"><span class="v">47.2°C</span></div>
<div class="c" style="left:485px;width:85px;height:21px;line-height:21px;padding-left:2px;top:623px"><span class="v">49.7°C</span></div>
<div class="c b d" style="left:573px;width:84px;height:21px;line-height:21px;padding-left:1px;top:554px">13:00</div>
<div class="c d" style="left:573px;width:84px;height:21px;line-height:21px;padding-left:1px;top:577px">–</div>
<div class="c d" style="left:573px;width:84px;height:21px;line-height:21px;padding-left:1px;top:600px">"</div>
<div class="c d" style="left:573px;width:84px;height:21px;line-height:21px;padding-left:1px;top:623px">"</div>
<div class="c b" style="left:660px;width:85px;height:21px;line-height:21px;padding-left:0.5px;top:554px">14:00</div>
<div class="c" style="left:660px;width:85px;height:21px;line-height:21px;padding-left:0.5px;top:577px">–</div>
<div class="c" style="left:660px;width:85px;height:21px;line-height:21px;padding-left:0.5px;top:600px">"</div>
<div class="c" style="left:660px;width:85px;height:21px;line-height:21px;padding-left:0.5px;top:623px">"</div>
<div class="c b d" style="left:747px;width:85px;height:21px;line-height:21px;padding-left:1px;top:554px">15:00</div>
<div class="c d" style="left:747px;width:85px;height:21px;line-height:21px;padding-left:1px;top:577px">–</div>
<div class="c d" style="left:747px;width:85px;height:21px;line-height:21px;padding-left:1px;top:600px">"</div>
<div class="c d" style="left:747px;width:85px;height:21px;line-height:21px;padding-left:1px;top:623px">"</div>
<div class="cl" style="left:32px;top:673px">Mittel</div>
<div class="cl" style="left:32px;top:696px">Minimum</div>
<div class="cl" style="left:32px;top:719px">Maximum</div>
<div class="c b d" style="left:136px;width:85px;height:20px;line-height:20px;padding-left:1px;top:649px">16:00</div>
<div class="c d" style="left:136px;width:85px;height:20px;line-height:20px;padding-left:1px;top:672px">–</div>
<div class="c d" style="left:136px;width:85px;height:20px;line-height:20px;padding-left:1px;top:695px">"</div>
<div class="c d" style="left:136px;width:85px;height:20px;line-height:20px;padding-left:1px;top:718px">"</div>
<div class="c b" style="left:223px;width:85px;height:20px;line-height:20px;padding-left:2px;top:649px">17:00</div>
<div class="c" style="left:223px;width:85px;height:20px;line-height:20px;padding-left:2px;top:672px">–</div>
<div class="c" style="left:223px;width:85px;height:20px;line-height:20px;padding-left:2px;top:695px">"</div>
<div class="c" style="left:223px;width:85px;height:20px;line-height:20px;padding-left:2px;top:718px">"</div>
<div class="c b d" style="left:311px;width:85px;height:20px;line-height:20px;padding-left:0.5px;top:649px">18:00</div>
<div class="c d" style="left:311px;width:85px;height:20px;line-height:20px;padding-left:0.5px;top:672px">–</div>
<div class="c d" style="left:311px;width:85px;height:20px;line-height:20px;padding-left:0.5px;top:695px">"</div>
<div class="c d" style="left:311px;width:85px;height:20px;line-height:20px;padding-left:0.5px;top:718px">"</div>
<div class="c b" style="left:398px;width:85px;height:20px;line-height:20px;padding-left:1px;top:649px">19:00</div>
<div class="c" style="left:398px;width:85px;height:20px;line-height:20px;padding-left:1px;top:672px">–</div>
<div class="c" style="left:398px;width:85px;height:20px;line-height:20px;padding-left:1px;top:695px">"</div>
<div class="c" style="left:398px;width:85px;height:20px;line-height:20px;padding-left:1px;top:718px">"</div>
<div class="c b d" style="left:485px;width:85px;height:20px;line-height:20px;padding-left:2px;top:649px">20:00</div>
<div class="c d" style="left:485px;width:85px;height:20px;line-height:20px;padding-left:2px;top:672px">–</div>
<div class="c d" style="left:485px;width:85px;height:20px;line-height:20px;padding-left:2px;top:695px">"</div>
<div class="c d" style="left:485px;width:85px;height:20px;line-height:20px;padding-left:2px;top:718px">"</div>
<div class="c b" style="left:573px;width:84px;height:20px;line-height:20px;padding-left:1px;top:649px">21:00</div>
<div class="c" style="left:573px;width:84px;height:20px;line-height:20px;padding-left:1px;top:672px">–</div>
<div class="c" style="left:573px;width:84px;height:20px;line-height:20px;padding-left:1px;top:695px">"</div>
<div class="c" style="left:573px;width:84px;height:20px;line-height:20px;padding-left:1px;top:718px">"</div>
<div class="c b d" style="left:660px;width:85px;height:20px;line-height:20px;padding-left:0.5px;top:649px">22:00</div>
<div class="c d" style="left:660px;width:85px;height:20px;line-height:20px;padding-left:0.5px;top:672px">–</div>
<div class="c d" style="left:660px;width:85px;height:20px;line-height:20px;padding-left:0.5px;top:695px">"</div>
<div class="c d" style="left:660px;width:85px;height:20px;line-height:20px;padding-left:0.5px;top:718px">"</div>
<div class="c b" style="left:747px;width:85px;height:20px;line-height:20px;padding-left:1px;top:649px">23:00</div>
<div class="c" style="left:747px;width:85px;height:20px;line-height:20px;padding-left:1px;top:672px">–</div>
<div class="c" style="left:747px;width:85px;height:20px;line-height:20px;padding-left:1px;top:695px">"</div>
<div class="c" style="left:747px;width:85px;height:20px;line-height:20px;padding-left:1px;top:718px">"</div>
</body></html>
